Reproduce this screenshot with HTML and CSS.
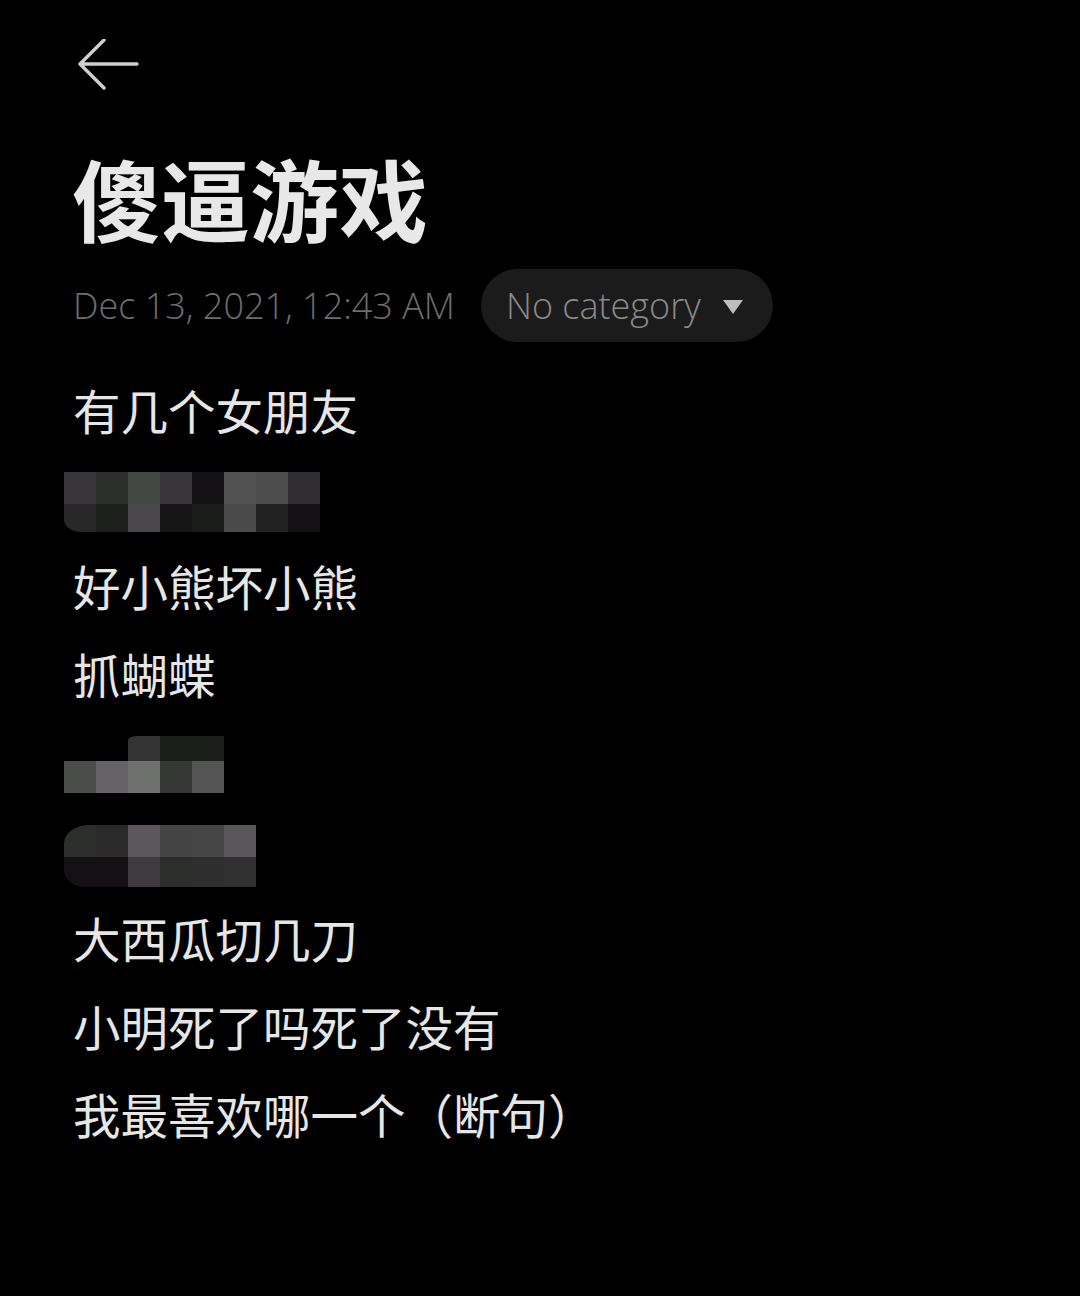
FILE: index.html
```html
<!DOCTYPE html>
<html lang="zh-CN">
<head>
<meta charset="utf-8">
<link rel="stylesheet" href="styles.css">
</head>
<body>
<div class="page">
  <header class="topbar">
    <svg class="back" width="64" height="60" viewBox="0 0 64 60">
      <path d="M60 25 H3 M27 1 L3 25 L27 49" fill="none" stroke="#cfcfcf" stroke-width="3.4" stroke-linecap="round" stroke-linejoin="round"/>
    </svg>
  </header>
  <h1 class="title">傻逼游戏</h1>
  <div class="meta">
    <span class="date">Dec 13, 2021, 12:43 AM</span>
    <span class="pill">No category <span class="tri"></span></span>
  </div>
  <div class="note">
    <div class="line">有几个女朋友</div>
    <div class="line"><div class="mosaic m1">
      <i class="a1"></i><i class="a2"></i><i class="a3"></i><i class="a4"></i><i class="a5"></i><i class="a6"></i><i class="a7"></i><i class="a8"></i>
      <i class="b1"></i><i class="b2"></i><i class="b3"></i><i class="b4"></i><i class="b5"></i><i class="b6"></i><i class="b7"></i><i class="b8"></i>
    </div></div>
    <div class="line">好小熊坏小熊</div>
    <div class="line">抓蝴蝶</div>
    <div class="line"><div class="mosaic m2">
      <i class="e"></i><i class="e"></i><i class="c1"></i><i class="c2"></i><i class="c2"></i>
      <i class="d1"></i><i class="d2"></i><i class="d3"></i><i class="d4"></i><i class="d5"></i>
    </div></div>
    <div class="line"><div class="mosaic m3">
      <i class="f1"></i><i class="f2"></i><i class="f3"></i><i class="f4"></i><i class="f5"></i><i class="f6"></i>
      <i class="g1"></i><i class="g1"></i><i class="g3"></i><i class="g4"></i><i class="g5"></i><i class="g6"></i>
    </div></div>
    <div class="line">大西瓜切几刀</div>
    <div class="line">小明死了吗死了没有</div>
    <div class="line">我最喜欢哪一个（断句）</div>
  </div>
</div>
</body>
</html>
```
FILE: styles.css
```css
html, body {
  margin: 0;
  padding: 0;
  background: #000;
}
body {
  width: 1080px;
  height: 1296px;
  overflow: hidden;
  font-family: "Noto Sans CJK SC", "Noto Sans", sans-serif;
  color: #e6e6e6;
}
.page {
  padding-left: 73px;
}
.topbar {
  height: 126px;
  display: flex;
  align-items: center;
  padding-left: 4px;
}
.back {
  display: block;
  margin-top: 11px;
}
.title {
  margin: 0;
  font-size: 89px;
  font-weight: 700;
  line-height: 110px;
  color: #e8e8e8;
  margin-left: -1px;
  margin-top: 16px;
}
.meta {
  display: flex;
  align-items: center;
  gap: 26px;
  margin-top: 17px;
}
.date {
  font-family: "Open Sans", sans-serif;
  font-weight: 300;
  font-size: 36px;
  color: #6e6e6e;
}
.pill {
  display: inline-flex;
  align-items: center;
  height: 73px;
  padding: 0 30px 0 25px;
  border-radius: 37px;
  background: #1b1b1b;
  font-family: "Open Sans", sans-serif;
  font-weight: 300;
  font-size: 36px;
  color: #8a8a8a;
}
.tri {
  width: 0;
  height: 0;
  border-left: 10px solid transparent;
  border-right: 10px solid transparent;
  border-top: 14px solid #bdbdbd;
  margin-left: 22px;
  margin-top: 2px;
}
.note {
  margin-top: 24px;
}
.line {
  height: 88px;
  display: flex;
  align-items: center;
  font-size: 47.5px;
  line-height: 88px;
}
.mosaic {
  display: grid;
  margin-left: -9px;
  overflow: hidden;
}
.mosaic i {
  display: block;
}
.m1 {
  grid-template-columns: repeat(8, 32px);
  grid-template-rows: 32px 28px;
  border-bottom-left-radius: 18px 12px;
  margin-top: 8px;
}
.m2 {
  grid-template-columns: repeat(5, 32px);
  grid-template-rows: 25px 32px;
  margin-top: 4px;
}
.m3 {
  grid-template-columns: repeat(6, 32px);
  grid-template-rows: 32px 30px;
  border-radius: 26px 0 0 22px / 18px 0 0 16px;
  margin-top: 12px;
}
.a1 { background: #39363b; }
.a2 { background: #2c2f2b; }
.a3 { background: #444843; }
.a4 { background: #39363b; }
.a5 { background: #141114; }
.a6 { background: #525252; }
.a7 { background: #4c4d4c; }
.a8 { background: #312e33; }
.b1 { background: #272827; }
.b2 { background: #1c1f1c; }
.b3 { background: #4a474c; }
.b4 { background: #161616; }
.b5 { background: #1a1d1a; }
.b6 { background: #4a4a4a; }
.b7 { background: #222222; }
.b8 { background: #141114; }
.e { background: transparent; }
.c1 { background: #333433; border-top-left-radius: 10px 4px; }
.c2 { background: #1b1e1b; }
.d1 { background: #4a4d4a; }
.d2 { background: #676168; }
.d3 { background: #6e716d; }
.d4 { background: #343734; }
.d5 { background: #545454; }
.f1 { background: #2c2e2c; }
.f2 { background: #2a2a2a; }
.f3 { background: #5b575c; }
.f4 { background: #434443; }
.f5 { background: #444544; }
.f6 { background: #5a575b; }
.g1 { background: #141014; }
.g3 { background: #3e3a3f; }
.g4 { background: #2b2e2b; }
.g5 { background: #2e2e2e; }
.g6 { background: #313131; }
```
